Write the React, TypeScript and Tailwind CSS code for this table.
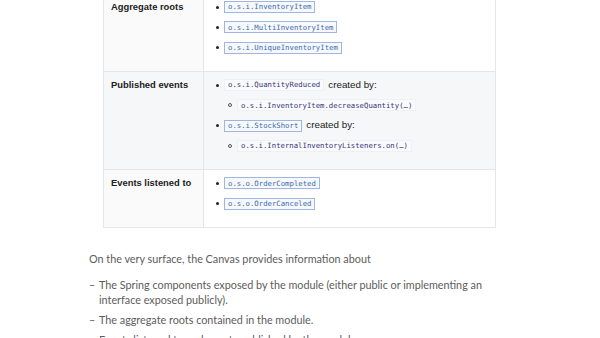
import React from 'react';

// Module canvas excerpt: table of module elements + description list

type Item = { code: string; linked?: boolean; after?: string; sub?: string };

const rows: { label: string; shaded?: boolean; items: Item[] }[] = [
  {
    label: 'Aggregate roots',
    items: [
      { code: 'o.s.i.InventoryItem', linked: true },
      { code: 'o.s.i.MultiInventoryItem', linked: true },
      { code: 'o.s.i.UniqueInventoryItem', linked: true },
    ],
  },
  {
    label: 'Published events',
    shaded: true,
    items: [
      { code: 'o.s.i.QuantityReduced', after: 'created by:', sub: 'o.s.i.InventoryItem.decreaseQuantity(…)' },
      { code: 'o.s.i.StockShort', linked: true, after: 'created by:', sub: 'o.s.i.InternalInventoryListeners.on(…)' },
    ],
  },
  {
    label: 'Events listened to',
    items: [
      { code: 'o.s.o.OrderCompleted', linked: true },
      { code: 'o.s.o.OrderCanceled', linked: true },
    ],
  },
];

function Code({ children, linked }: { children: React.ReactNode; linked?: boolean }) {
  return (
    <span
      className={
        'inline-flex items-center h-[12px] px-[3px] font-["DejaVu_Sans_Mono",monospace] text-[7.3px] leading-none ' +
        (linked
          ? 'border border-[#9fb7de] bg-[#f6f8fc] text-[#3d6cab]'
          : 'border border-[#eef0f3] bg-[#f9fafb] text-[#3b3478]')
      }
    >
      {children}
    </span>
  );
}

function Bullet({ hollow }: { hollow?: boolean }) {
  return hollow ? (
    <span className="w-[4px] h-[4px] rounded-full border border-[#555] shrink-0" />
  ) : (
    <span className="w-[3px] h-[3px] rounded-full bg-[#222] shrink-0" />
  );
}

export default function App() {
  return (
    <div className="w-[600px] h-[338px] overflow-hidden bg-white">
      {/* Table */}
      <div className="ml-[103px] w-[393px] -mt-[7px] border border-[#e4e6e8] font-['Liberation_Sans',Arial,sans-serif]">
        {rows.map((row, i) => (
          <div
            key={row.label}
            className={
              'flex ' + (i > 0 ? 'border-t border-[#e4e6e8] ' : '') + (row.shaded ? 'bg-[#f5f7f8]' : 'bg-white')
            }
          >
            <div
              className={
                'w-[100px] shrink-0 border-r border-[#e4e6e8] pl-[7px] pt-[6px] text-[9.4px] leading-[14px] font-bold text-[#222] ' +
                (row.shaded ? '' : 'bg-[#fafafa]')
              }
            >
              {row.label}
            </div>
            <ul className="flex-1 pl-[12px] pt-[3px] pb-[13px]">
              {row.items.map((it) => (
                <React.Fragment key={it.code}>
                  <li className="h-[20.3px] flex items-center gap-[5px] text-[9.8px] text-[#222]">
                    <Bullet />
                    <Code linked={it.linked}>{it.code}</Code>
                    {it.after && <span className="-ml-[1px]">{it.after}</span>}
                  </li>
                  {it.sub && (
                    <li className="h-[20.3px] flex items-center gap-[5px] pl-[12px]">
                      <Bullet hollow />
                      <Code>{it.sub}</Code>
                    </li>
                  )}
                </React.Fragment>
              ))}
            </ul>
          </div>
        ))}
      </div>

      {/* Description */}
      <div className="ml-[89px] mr-[100px] mt-[23px] font-['Lato',sans-serif] text-[10.8px] text-[#5c5c5c]">
        <p className="leading-[16px]">On the very surface, the Canvas provides information about</p>
        <ul className="mt-[10px]">
          <li className="flex leading-[15px] mb-[5px]">
            <span className="w-[10px] shrink-0">–</span>
            <span>The Spring components exposed by the module (either public or implementing an interface exposed publicly).</span>
          </li>
          <li className="flex leading-[15px] mb-[5px]">
            <span className="w-[10px] shrink-0">–</span>
            <span>The aggregate roots contained in the module.</span>
          </li>
          <li className="flex leading-[15px] mb-[5px]">
            <span className="w-[10px] shrink-0">–</span>
            <span>Events listened to and events published by the module.</span>
          </li>
        </ul>
      </div>
    </div>
  );
}
